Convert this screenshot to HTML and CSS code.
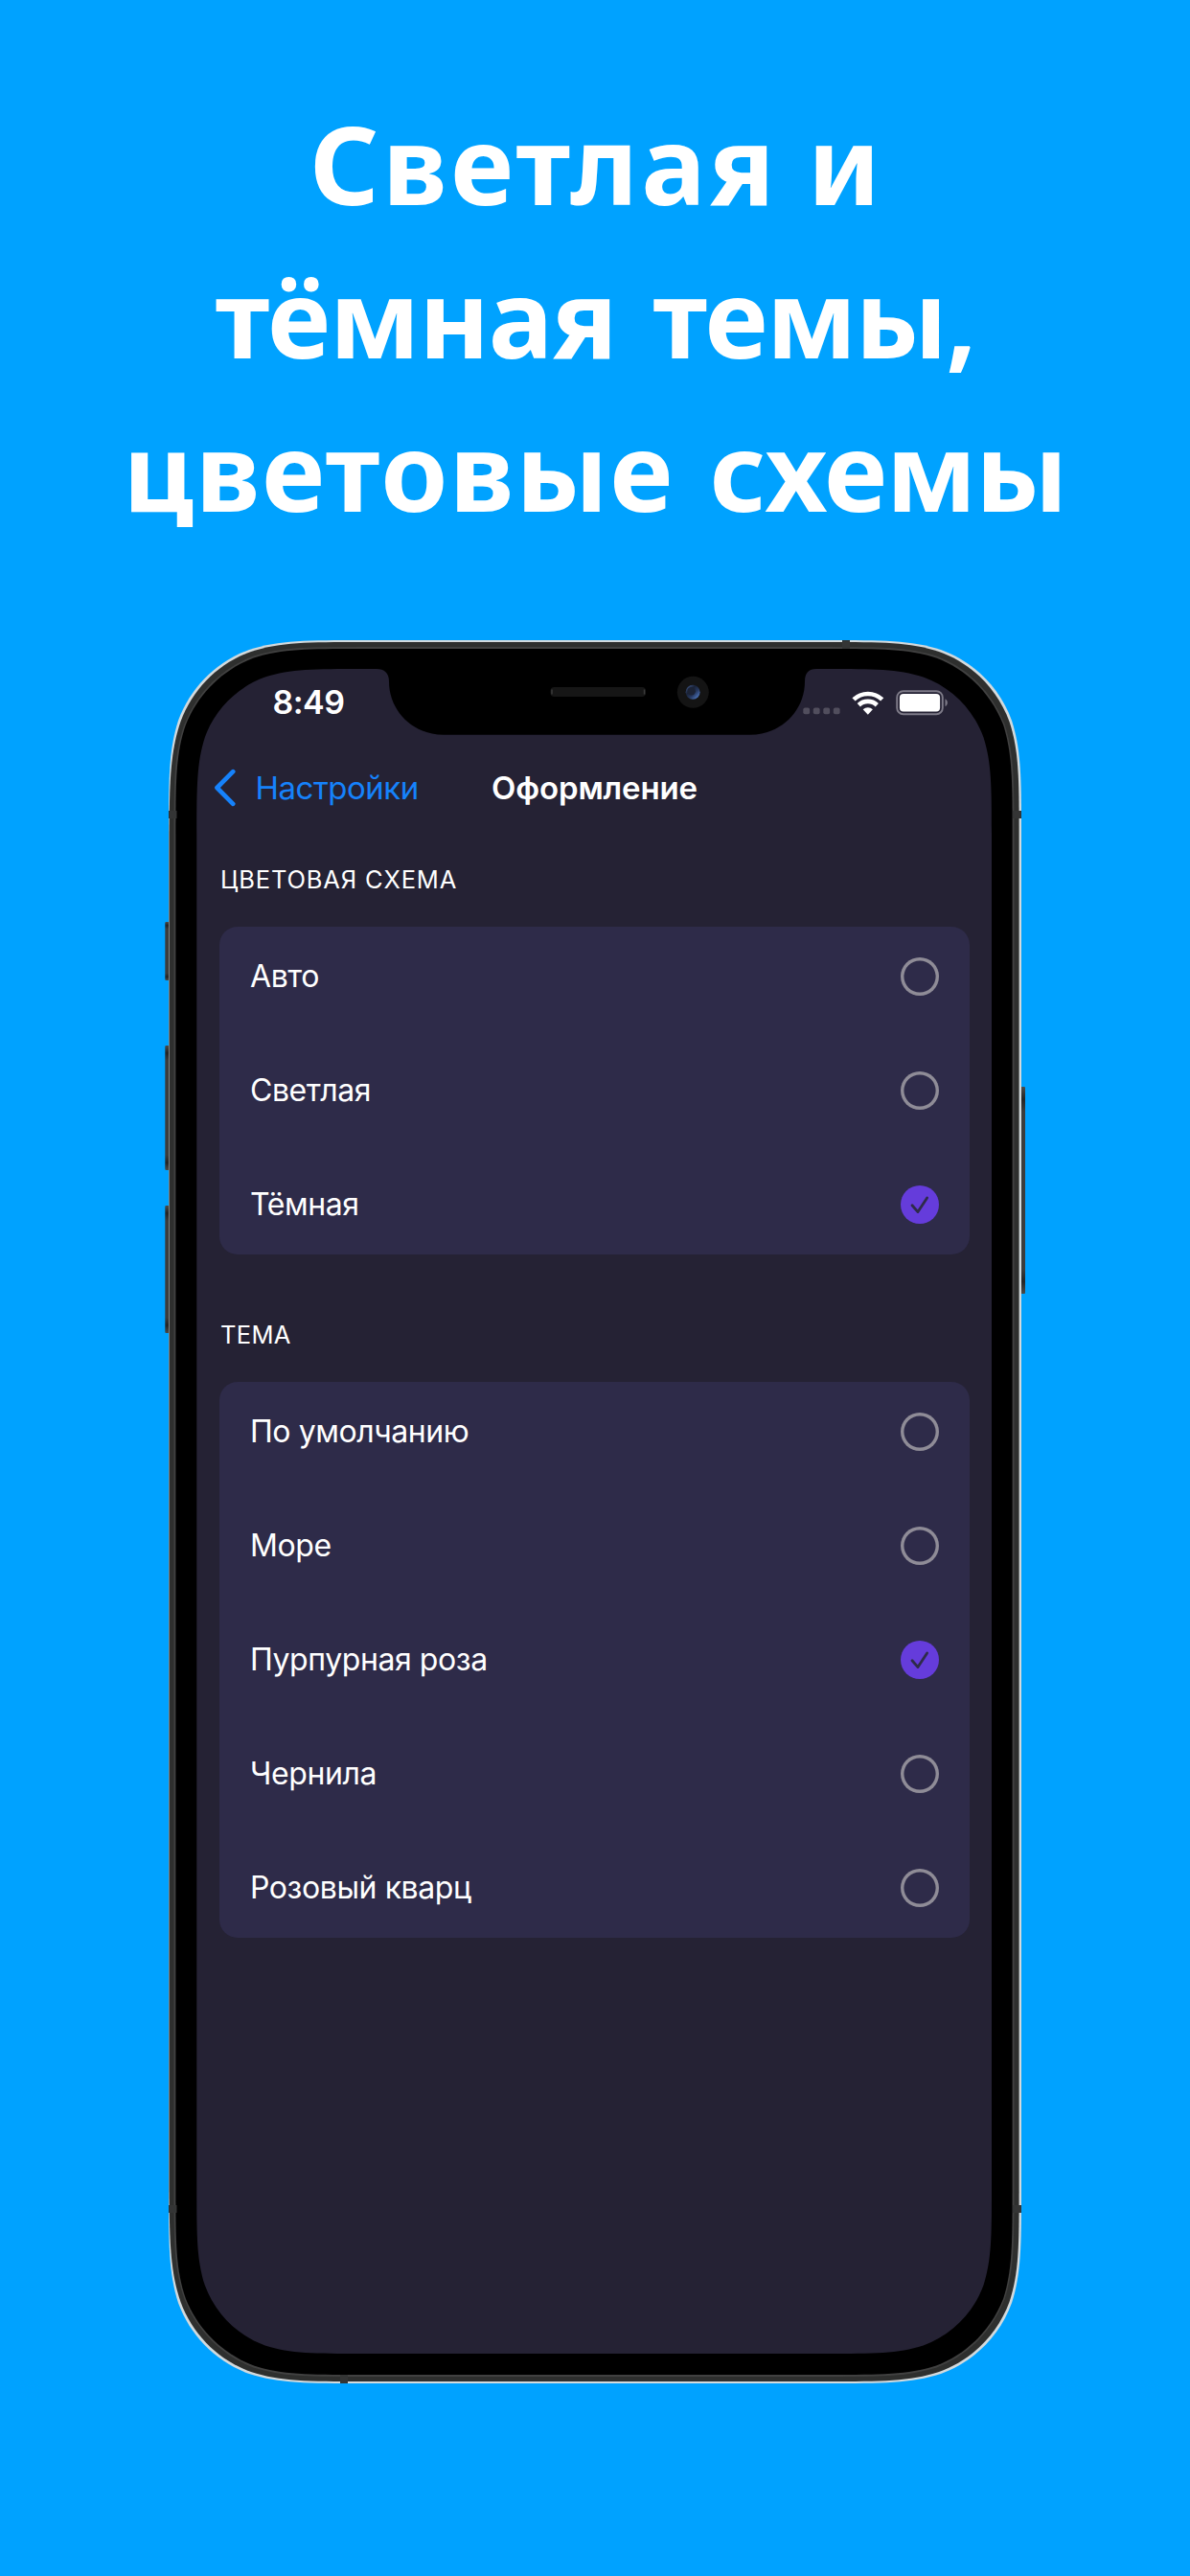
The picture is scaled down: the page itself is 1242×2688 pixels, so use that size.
FILE: index.html
```html
<!DOCTYPE html>
<html lang="ru">
<head>
<meta charset="utf-8">
<title>Оформление</title>
<link rel="stylesheet" href="styles.css">
</head>
<body>
<h1 class="headline">
  <span class="line line-1"><span class="wide">Светлая</span> и</span>
  <span class="line line-2"><span class="snug">тёмная</span> <span class="tight">темы,</span></span>
  <span class="line line-3"><span class="loose">цветовые</span> <span class="snug">схемы</span></span>
</h1>
<main class="phone">
  <svg class="frame" viewBox="171 667 900 1821" width="900" height="1821" aria-hidden="true">
    <defs>
      <linearGradient id="btn" x1="0" y1="0" x2="0" y2="1">
        <stop offset="0" stop-color="#4a4b4a"/><stop offset=".06" stop-color="#242525"/><stop offset=".12" stop-color="#3c3d3c"/>
        <stop offset=".88" stop-color="#3c3d3c"/><stop offset=".94" stop-color="#242525"/><stop offset="1" stop-color="#4a4b4a"/>
      </linearGradient>
      <linearGradient id="lens" x1="0" y1="0" x2="1" y2="1">
        <stop offset="0" stop-color="#4d6ba8"/><stop offset=".35" stop-color="#1a2338"/><stop offset=".6" stop-color="#26385f"/><stop offset="1" stop-color="#5d92e8"/>
      </linearGradient>
    </defs>
    <g fill="url(#btn)">
      <rect x="172.3" y="962" width="6" height="61" rx="1"/>
      <rect x="172.3" y="1091" width="6" height="130" rx="1"/>
      <rect x="172.3" y="1258" width="6" height="133" rx="1"/>
      <rect x="1064" y="1134" width="6" height="216" rx="1"/>
    </g>
    <path fill="#d3dadd" d="M379.3 668H862.7C921.2 668 950.5 668 982 678C1016.4 690.5 1043.5 717.6 1056 752C1066 783.500 1066 812.800 1066 871.300V2283.700C1066 2342.200 1066 2371.500 1056 2403C1043.500 2437.400 1016.400 2464.500 982 2477C950.500 2487 921.200 2487 862.700 2487H379.300C320.800 2487 291.500 2487 260 2477C225.600 2464.500 198.500 2437.400 186 2403C176 2371.500 176 2342.200 176 2283.700V871.300C176 812.800 176 783.500 186 752C198.500 717.600 225.600 690.500 260 678C291.500 668 320.800 668 379.300 668Z"/>
    <path fill="#2e2f2e" d="M378 670H863C921 670 949 670 980 680C1014 692 1041 719 1053.500 753C1063.600 784 1063.600 813 1063.600 871V2284C1063.600 2342 1063.600 2371 1053.500 2402C1041 2436 1014 2463 980 2475C949 2485 921 2485 863 2485H378C321 2485 293 2485 262 2475C228 2463 201 2436 188.500 2402C178 2371 177 2342 176.500 2284V871C177 813 178 784 188.500 753C201 719 228 692 262 680C293 670 321 670 378 670Z"/>
    <path fill="none" stroke="#414141" stroke-width="3" d="M376 676.500H864C920 676.500 947 676.500 977 686C1009 698 1034 723 1047 756C1057 786 1057 815 1057 871V2284C1057 2340 1057 2369 1047 2399C1034 2432 1009 2457 977 2469C947 2478.500 920 2478.500 864 2478.500H376C321 2478.500 295 2478.500 265 2469C233 2457 207 2432 194 2399C183 2369 183 2340 183 2284V871C183 815 183 786 194 756C207 723 233 698 265 686C295 676.500 321 676.500 376 676.500Z"/>
    <path fill="#000" d="M376 677H864C920 677 947 677 977 686.500C1009 698.500 1034 723.500 1047 756C1056.600 786 1056.600 815 1056.600 871V2284C1056.600 2340 1056.600 2369 1047 2399C1034 2431.500 1009 2456.500 977 2468.500C947 2478 920 2478 864 2478H376C321 2478 295 2478 265 2468.500C233 2456.500 207 2431.500 194 2399C183.400 2369 183.400 2340 183.400 2284V871C183.400 815 183.400 786 194 756C207 723.500 233 698.500 265 686.500C295 677 321 677 376 677Z"/>
    <g fill="#343535">
      <rect x="879" y="668" width="8" height="9"/><rect x="355" y="2478" width="8" height="9"/>
      <rect x="176" y="846" width="8.500" height="8"/><rect x="1057" y="846" width="9" height="8"/>
      <rect x="176" y="2301" width="8.500" height="8"/><rect x="1057" y="2301" width="9" height="8"/>
    </g>
    <path fill="#252234" d="M378 698H393C401 698 406 702 406 711C406 742 431 766.700 463 766.700H783C815 766.700 840 742 840 711C840 702 844 698 852 698H862.300C912 698 936.900 698 963.600 706.500C992.900 717.100 1015.900 740.100 1026.500 769.400C1035 796.100 1035 821 1035 870.700V2283.300C1035 2333 1035 2357.900 1026.500 2384.600C1015.900 2413.900 992.900 2436.900 963.600 2447.500C936.900 2456 912 2456 862.300 2456H378C328.300 2456 303.400 2456 276.700 2447.500C247.400 2436.900 224.400 2413.900 213.800 2384.600C205.300 2357.900 205.300 2333 205.300 2283.300V870.700C205.300 821 205.300 796.100 213.800 769.400C224.400 740.100 247.400 717.100 276.700 706.500C303.400 698 328.300 698 378 698Z"/>
    <rect x="574.500" y="717" width="99.500" height="10" rx="4" fill="#161616"/>
    <path d="M576 719.500v5M672.500 719.500v5" stroke="#3a3a3a" stroke-width="1.500"/>
    <circle cx="723.300" cy="722.300" r="16.500" fill="#141414"/>
    <circle cx="723.100" cy="722.300" r="7.500" fill="url(#lens)"/>
    <circle cx="721.600" cy="721.300" r="4.200" fill="#1c2335"/>
  </svg>
  <div class="screen">
    <div class="status">
      <span class="time">8:49</span>
      <svg class="indicators" viewBox="837 718 154 30" width="154" height="30" aria-hidden="true">
        <g fill="#514e5d"><rect x="838.300" y="738.600" width="6.800" height="6.600" rx="2"/><rect x="848.800" y="738.600" width="6.800" height="6.600" rx="2"/><rect x="859.300" y="738.600" width="6.800" height="6.600" rx="2"/><rect x="869.800" y="738.600" width="6.800" height="6.600" rx="2"/></g>
        <g fill="none" stroke="#fff" stroke-width="4.700"><path d="M891 729.900A21.600 21.600 0 0 1 920.700 729.900"/><path d="M896.300 735.800A13.700 13.700 0 0 1 915.300 735.800"/></g>
        <path fill="#fff" d="M900.700 740.200A7.600 7.600 0 0 1 910.900 740.200L905.800 745.700Z"/>
        <rect x="936.200" y="721.200" width="47.600" height="24" rx="6.500" fill="none" stroke="#7e7b88" stroke-width="1.900"/>
        <rect x="938.900" y="723.900" width="42.200" height="18.600" rx="4" fill="#fff"/>
        <path d="M986.500 729.200C989.600 730.600 989.600 735.800 986.500 737.200Z" fill="#7e7b88"/>
      </svg>
    </div>
    <nav class="nav">
      <a class="back"><svg class="chevron" viewBox="0 0 24 40" width="24" height="40" aria-hidden="true"><path d="M20.200 3.200L3.500 20L20.200 36.800" fill="none" stroke="#1682fb" stroke-width="4.700" stroke-linecap="round" stroke-linejoin="round"/></svg><span class="back-label">Настройки</span></a>
      <span class="title">Оформление</span>
    </nav>
    <section class="group">
      <h2 class="caption">ЦВЕТОВАЯ СХЕМА</h2>
      <ul class="card">
        <li class="row"><span>Авто</span><i class="radio"></i></li>
        <li class="row"><span>Светлая</span><i class="radio"></i></li>
        <li class="row"><span>Тёмная</span><svg class="check" viewBox="0 0 40 40" width="40" height="40"><circle cx="20" cy="20" r="20" fill="#653cdb"/><path d="M12 20.800L18 27.600L27.600 13" fill="none" stroke="#2e2b49" stroke-width="2.800" stroke-linecap="round" stroke-linejoin="round"/></svg></li>
      </ul>
    </section>
    <section class="group">
      <h2 class="caption">ТЕМА</h2>
      <ul class="card">
        <li class="row"><span>По умолчанию</span><i class="radio"></i></li>
        <li class="row"><span>Море</span><i class="radio"></i></li>
        <li class="row"><span>Пурпурная роза</span><svg class="check" viewBox="0 0 40 40" width="40" height="40"><circle cx="20" cy="20" r="20" fill="#653cdb"/><path d="M12 20.800L18 27.600L27.600 13" fill="none" stroke="#2e2b49" stroke-width="2.800" stroke-linecap="round" stroke-linejoin="round"/></svg></li>
        <li class="row"><span>Чернила</span><i class="radio"></i></li>
        <li class="row"><span>Розовый кварц</span><i class="radio"></i></li>
      </ul>
    </section>
  </div>
</main>
</body>
</html>
```
FILE: styles.css
```css
* { box-sizing: border-box; }

body {
  margin: 0;
  height: 2688px;
  overflow: hidden;
  background: #00a2ff;
  color: #fff;
  font-family: Inter, "Noto Sans", sans-serif;
}

.headline {
  margin: 0;
  height: 667px;
  padding-top: 90px;
  font: 700 113px/160px "Noto Sans", sans-serif;
  text-align: center;
}
.line { display: block; white-space: nowrap; }
.line-1 { word-spacing: 1.800px; }
.line-2 { word-spacing: 9px; }
.line-3 { word-spacing: 7px; }
.wide { letter-spacing: 3.400px; }
.loose { letter-spacing: 1.700px; }
.snug { letter-spacing: -1.300px; }
.tight { letter-spacing: -1.800px; }

.phone {
  position: relative;
  width: 900px;
  height: 1821px;
  margin-left: 171px;
  padding: 31px 36px 31px 34px;
}
.frame { position: absolute; left: 0; top: 0; }

.screen {
  position: relative;
  height: 1758px;
}

.status {
  display: flex;
  justify-content: space-between;
  align-items: center;
  height: 70px;
  padding: 0 44px 0 79.500px;
}
.time { font-size: 34px; font-weight: 600; line-height: 40px; letter-spacing: -0.500px; }
.indicators { display: block; }

.nav {
  display: grid;
  grid-template-columns: 1fr auto 1fr;
  align-items: center;
  height: 107px;
  padding: 0 17px 0 18px;
  font-size: 33px;
  line-height: 40px;
}
.back { display: flex; align-items: center; gap: 19.500px; color: #1682fb; letter-spacing: -0.500px; }
.chevron { display: block; }
.title { font-weight: 600; letter-spacing: -0.150px; }

.group { padding: 0 23.500px 0 24px; }
.caption {
  margin: 0;
  height: 91.500px;
  padding: 23px 0 0 1px;
  font-size: 25.500px;
  line-height: 40px;
  font-weight: 400;
  letter-spacing: 0.850px;
}
.group + .group .caption { height: 133px; padding-top: 64px; letter-spacing: 0.300px; }
.card {
  display: flex;
  flex-direction: column;
  gap: 15px;
  margin: 0;
  padding: 0;
  list-style: none;
  background: #2e2b49;
  border-radius: 19px;
}
.row {
  display: flex;
  justify-content: space-between;
  align-items: center;
  height: 104px;
  padding: 0 31.500px 0 32px;
  font-size: 32px;
  letter-spacing: -0.420px;
}
.radio {
  width: 40px;
  height: 40px;
  border-radius: 50%;
  box-shadow: inset 0 0 0 3.400px #8f8c97;
}
.check { display: block; }
```
